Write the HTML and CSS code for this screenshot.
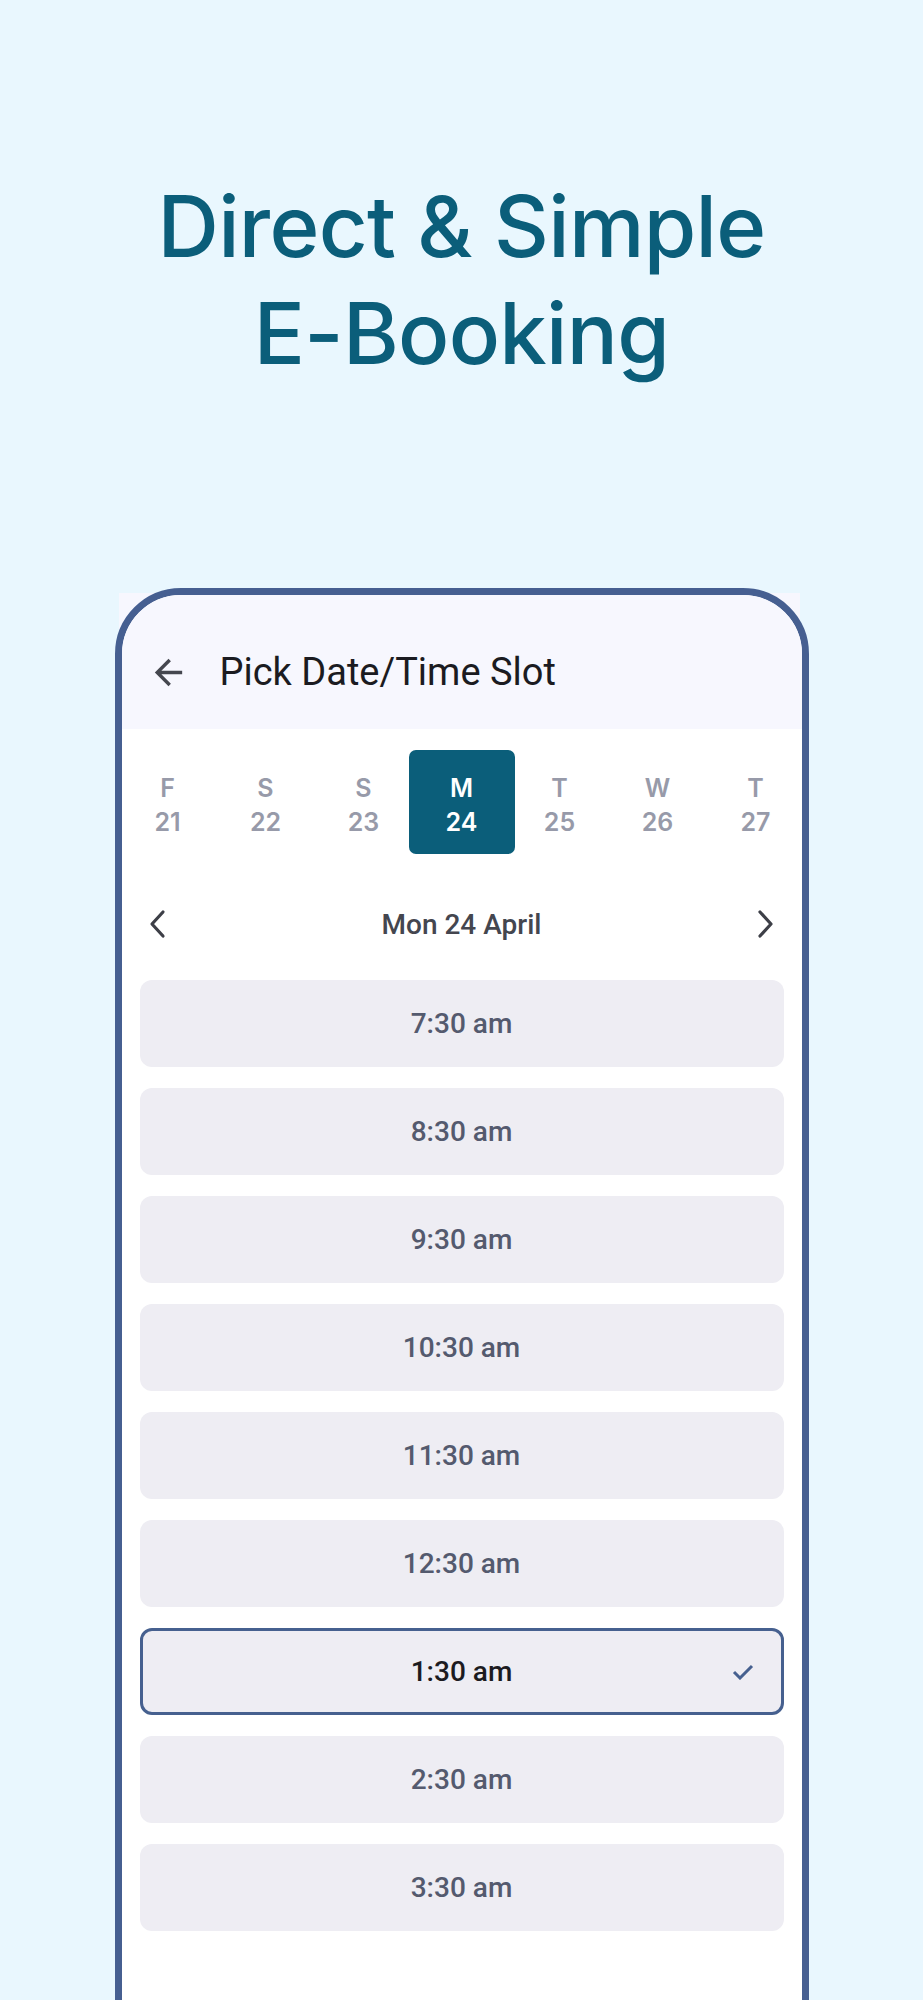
FILE: index.html
```html
<!DOCTYPE html>
<html lang="en">
<head>
    <meta charset="UTF-8">
    <meta name="viewport" content="width=device-width, initial-scale=1.0">
    <title>Direct &amp; Simple E-Booking</title>
    <link rel="stylesheet" href="styles.css">
</head>
<body>
    <h1 class="headline">Direct &amp; Simple<br>E-Booking</h1>

    <div class="phone">
        <div class="appbar">
            <svg class="back" width="41" height="41" viewBox="0 0 24 24"><path d="M20 11H7.83l5.59-5.59L12 4l-8 8 8 8 1.41-1.41L7.83 13H20v-2z"/></svg>
            <span class="title">Pick Date/Time Slot</span>
        </div>

        <div class="days">
            <div class="day"><span>F</span><span>21</span></div>
            <div class="day"><span>S</span><span>22</span></div>
            <div class="day"><span>S</span><span>23</span></div>
            <div class="day active"><span>M</span><span>24</span></div>
            <div class="day"><span>T</span><span>25</span></div>
            <div class="day"><span>W</span><span>26</span></div>
            <div class="day"><span>T</span><span>27</span></div>
        </div>

        <div class="datenav">
            <svg width="18" height="30" viewBox="0 0 18 30"><polyline points="14,3 3,15 14,27"/></svg>
            <span class="date">Mon 24 April</span>
            <svg width="18" height="30" viewBox="0 0 18 30"><polyline points="4,3 15,15 4,27"/></svg>
        </div>

        <div class="slots">
            <div class="slot"><span>7:30 am</span></div>
            <div class="slot"><span>8:30 am</span></div>
            <div class="slot"><span>9:30 am</span></div>
            <div class="slot"><span>10:30 am</span></div>
            <div class="slot"><span>11:30 am</span></div>
            <div class="slot"><span>12:30 am</span></div>
            <div class="slot selected"><span>1:30 am</span><svg class="check" width="22" height="16" viewBox="0 0 22 16"><polyline points="2,8 8,14 20,2"/></svg></div>
            <div class="slot"><span>2:30 am</span></div>
            <div class="slot"><span>3:30 am</span></div>
        </div>
    </div>
</body>
</html>
```

FILE: styles.css
```css
body {
    margin: 0;
    background-color: #e9f7fe;
    font-family: Roboto, "Liberation Sans", sans-serif;
}
.headline {
    margin: 173px 0 0;
    text-align: center;
    font-family: Inter, "Liberation Sans", sans-serif;
    font-size: 85px;
    font-weight: 500;
    line-height: 107px;
    letter-spacing: -0.7px;
    color: #0b5e7a;
}
.phone {
    position: relative;
    width: 680px;
    margin: 201px auto 0;
    padding-bottom: 140px;
    border: 7px solid #465f91;
    border-radius: 66px;
    background-color: #fff;
}
.phone::before {
    content: "";
    position: absolute;
    left: -3px;
    top: -2px;
    width: 681px;
    height: 100px;
    background-color: #f7f7fe;
    z-index: -1;
}
.appbar {
    display: flex;
    align-items: center;
    height: 134px;
    box-sizing: border-box;
    padding: 20px 0 0 26px;
    background-color: #f7f7fe;
    border-radius: 59px 59px 0 0;
}
.back {
    fill: #45474f;
}
.title {
    margin-left: 31px;
    font-size: 38px;
    color: #1b1b21;
}
.days {
    display: grid;
    grid-template-columns: repeat(7, minmax(0, 1fr));
    margin: 0 -3px;
    padding-top: 21px;
}
.day {
    display: flex;
    flex-direction: column;
    align-items: center;
    justify-content: center;
    height: 104px;
    box-sizing: border-box;
    padding-top: 5px;
    font-family: Inter, "Liberation Sans", sans-serif;
    font-size: 25px;
    font-weight: 600;
    line-height: 34px;
    color: #979aa9;
}
.day.active {
    margin: 0 -4px;
    border-radius: 7px;
    background-color: #0b5e7a;
    color: #fff;
}
.datenav {
    display: flex;
    align-items: center;
    justify-content: space-between;
    height: 60px;
    margin-top: 40px;
    padding: 0 27px;
}
.datenav polyline {
    fill: none;
    stroke: #3d3f47;
    stroke-width: 3.2;
    stroke-linecap: round;
    stroke-linejoin: round;
}
.date {
    font-size: 28px;
    font-weight: 500;
    color: #44464f;
}
.slots {
    display: flex;
    flex-direction: column;
    gap: 21px;
    margin: 26px 18px 0;
}
.slot {
    display: grid;
    grid-template-columns: 1fr auto 1fr;
    align-items: center;
    height: 87px;
    box-sizing: border-box;
    border-radius: 12px;
    background-color: #eeedf3;
    font-size: 28px;
    font-weight: 500;
    color: #545a6e;
}
.slot span {
    grid-column: 2;
}
.slot.selected {
    border: 3px solid #46608f;
    color: #1c1b1f;
}
.check {
    justify-self: end;
    margin-right: 27px;
}
.check polyline {
    fill: none;
    stroke: #46608f;
    stroke-width: 3;
}
```
